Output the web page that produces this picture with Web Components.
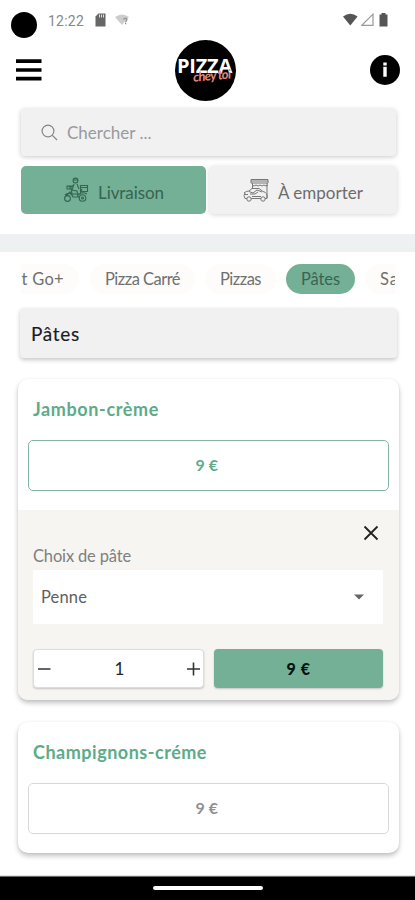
<!DOCTYPE html>
<html lang="fr">
<head>
<meta charset="utf-8">
<title>Pizza</title>
<style>
html,body{margin:0;background:#fff}
body{width:415px;height:900px;overflow:hidden;font-family:Lato,"Open Sans",sans-serif;color:#555}
</style>
</head>
<body>
<pizza-app></pizza-app>
<script>
const define=(name,html,after)=>{
  const t=document.createElement('template');t.innerHTML=html;
  customElements.define(name,class extends HTMLElement{
    constructor(){super();this.attachShadow({mode:'open'}).append(t.content.cloneNode(true));}
    connectedCallback(){if(after)after(this,this.shadowRoot);}
  });
};

/* Text tracked so that its line takes the width given in w. */
define('fit-text','<style>:host{display:inline-block;white-space:nowrap;line-height:20px;flex:none}span{display:inline-block}</style><span><slot></slot></span>',(el,root)=>{
  const w=+el.getAttribute('w'),span=root.querySelector('span');
  el.style.width=w+'px';
  span.style.letterSpacing=((w-span.getBoundingClientRect().width)/el.textContent.length)+'px';
});

define('status-bar',`<style>
:host{display:flex;height:40px;box-sizing:border-box;padding:11px 26px 0 11px;font:14px Roboto,sans-serif;color:#888}
.cam{width:26px;height:26px;border-radius:50%;background:#000;margin-right:11px;margin-top:1px}
svg{display:block;flex:none}.gap{flex:1}
</style>
<div class="cam"></div><fit-text w="36">12:22</fit-text>
<svg style="margin:2px 0 0 11px" width="11" height="14"><path d="M3.5 .5H10.5V13.5H.5V3.5Z" fill="#666"/><path d="M4.500 1.500v3M6.500 1.500v3M8.500 1.500v3" stroke="#ddd"/></svg>
<svg style="margin:3px 0 0 9px" width="15" height="13"><path d="M0 3Q7-2 14 3L7 11Z" fill="#ccc"/><path d="M8.500 5.500Q9 4 10.700 4.300Q13 5 11 7.200L10.600 8.400M10.600 9v1.200" fill="none" stroke="#888" stroke-width="1.200"/></svg>
<div class="gap"></div>
<svg style="margin-top:2px" width="15" height="13"><path d="M0 3.5Q7.3-2 14.6 3.5L7.3 12.5Z" fill="#555"/></svg>
<svg style="margin:2px 0 0 3px" width="13" height="14"><path d="M12 1.2V12.4H.8Z" fill="none" stroke="#999" stroke-width="1.2"/></svg>
<svg style="margin:2px 1px 0 5px" width="9" height="14"><path d="M2.5 0h4v1.5H8.500V13.500H.5V1.500h2Z" fill="#555"/></svg>`);

define('brand-logo',`<style>
:host{display:block;position:relative;width:61px;height:61px;border-radius:50%;background:#000;color:#fff}
.p{position:absolute;left:2px;top:16px;font:700 20px/20px "Open Sans",sans-serif}
.c{position:absolute;left:18px;top:25px;color:#e08a80;font:italic bold 13px/20px Lato,sans-serif;transform:rotate(-5deg)}
</style><fit-text class="p" w="55">PIZZA</fit-text><fit-text class="c" w="39">chey toi</fit-text>`);

define('top-bar',`<style>
:host{display:flex;justify-content:space-between;height:61px;padding:0 15px 0 16px}
svg{display:block}brand-logo{margin-right:1px}
</style>
<svg style="margin-top:19px" width="26" height="23"><path d="M0 2.200h25.500M0 11h25.500M0 19.700h25.500" stroke="#000" stroke-width="3.700"/></svg>
<brand-logo></brand-logo>
<svg style="margin-top:15px" width="30" height="30"><circle cx="15" cy="15" r="15"/><path d="M15 7.500v3M15 11.800v10" stroke="#fff" stroke-width="3.400"/></svg>`);

define('search-box',`<style>
:host{display:flex;align-items:center;height:47px;width:375px;box-sizing:border-box;padding-left:20px;background:#f1f1f1;border-radius:4px;box-shadow:0 1px 5px rgba(0,0,0,.22);font-size:17px;color:#989aa0}
svg{margin-right:9px}
</style><svg width="17" height="17" fill="none" stroke="#82858a" stroke-width="1.200"><circle cx="7" cy="7" r="5.900"/><path d="M11.400 11.400L16 16"/></svg><fit-text w="89"><slot></slot></fit-text>`);

define('mode-tab',`<style>
:host{display:flex;align-items:center;height:48px;box-sizing:border-box;background:#f1f1f1;border-radius:5px;box-shadow:0 1px 5px rgba(0,0,0,.16);font-size:17px;color:#6c6c6c;padding-top:6px}
:host([active]){background:#73b096;box-shadow:none;color:#386350}
::slotted(svg){flex:none;margin-top:-7px}
</style><slot></slot>`);

define('menu-chip',`<style>
:host{display:block;height:30px;box-sizing:border-box;padding:5px 15px;border-radius:15px;background:#fdfcfa;font-size:16.5px;color:#707070;flex:none}
:host([active]){background:#73b096;color:#3c6352}
</style><slot></slot>`);

define('section-title',`<style>
:host{display:block;width:377px;height:50px;box-sizing:border-box;padding:14px 0 0 11px;border-radius:4px;background:#f1f1f1;box-shadow:0 2px 4px rgba(0,0,0,.22);font-size:19px;color:#1c1c1c;-webkit-text-stroke:.15px}
</style><slot></slot>`);

define('price-box',`<style>
:host{display:flex;align-items:center;justify-content:center;width:361px;height:51px;box-sizing:border-box;border:1px solid #d7d9d9;border-radius:5px;margin-left:10px;padding-bottom:2px;font-size:16px;font-weight:700;color:#909090;background:#fff}
:host([active]){border-color:#82b5a1;color:#60ab8b}
</style><fit-text w="26"><slot></slot></fit-text>`);

define('dish-card',`<style>
:host{display:block;width:381px;border-radius:10px;background:#fff;box-shadow:0 3px 5px rgba(0,0,0,.24),0 0 3px rgba(0,0,0,.05);overflow:hidden}
.title{box-sizing:border-box;padding:19px 0 0 15px;height:41px;font-size:18px;font-weight:700;color:#5dab89}
</style><div class="title"><slot name="title"></slot></div><slot></slot>`);

define('option-panel',`<style>
:host{display:block;background:#f6f5f2;margin-top:19px;height:191px;box-sizing:border-box;padding:15px 15px 0}
.close{display:flex;justify-content:flex-end;height:21px;padding-right:5px}
.label{height:20px;line-height:20px;font-size:16.5px;color:#808080}
.select{display:flex;align-items:center;justify-content:space-between;width:350px;height:54px;background:#fff;box-sizing:border-box;padding:0 19px 0 8px;margin-top:4px;font-size:16.5px;color:#606060}
.row{display:flex;gap:10px;margin-top:25px}
.qty{width:171px;height:39px;box-sizing:border-box;border:1px solid #ddd;border-radius:4px;background:#fff;box-shadow:0 1px 2px #0003;display:flex;align-items:center;justify-content:space-between;padding:0 3px 0 4px;font-size:17px;color:#222}
.add{width:169px;height:39px;border-radius:4px;background:#73b096;box-shadow:0 1px 2px #0003;display:flex;align-items:center;justify-content:center;font-size:16px;font-weight:900;color:#07140e}
svg{display:block}
</style>
<div class="close"><svg width="16" height="16"><path d="M1.500 1.500L14.500 14.500M14.500 1.500L1.500 14.500" stroke="#222" stroke-width="1.800"/></svg></div>
<div class="label"><fit-text w="98">Choix de pâte</fit-text></div>
<div class="select"><fit-text w="46">Penne</fit-text><svg width="10" height="6"><path d="M0 .500h10L5 5.500Z" fill="#666"/></svg></div>
<div class="row"><div class="qty"><svg width="13" height="14"><path d="M0 7h12.500" stroke="#333" stroke-width="1.600"/></svg><fit-text w="9">1</fit-text><svg width="13" height="14"><path d="M0 7h13M6.500 .500v13" stroke="#333" stroke-width="1.600"/></svg></div>
<div class="add"><fit-text w="24">9 €</fit-text></div></div>`);

define('system-nav',`<style>
:host{display:flex;justify-content:center;height:23px;box-sizing:border-box;padding-top:9px;background:#000;box-shadow:0 -1px 1px #666}
i{width:110px;height:4px;border-radius:2px;background:#fff}
</style><i></i>`);

define('pizza-app',`<style>
:host{display:flex;flex-direction:column;width:415px;height:900px;background:#fff;overflow:hidden}
search-box{margin:8px 0 0 21px}
.tabs{display:grid;grid-template-columns:185px 188px;gap:3px;margin:10px 0 0 21px}
.band{height:18px;background:#eef1f1;margin-top:20px}
.chips{display:flex;gap:10px;width:374px;margin:12px 0 0 21px;overflow:hidden;height:30px}
section-title{margin:14px 0 0 20px}
dish-card{margin-left:18px;flex:none}
.one{margin-top:21px;height:321px}.two{margin-top:22px;height:131px}
.price{padding-top:20px}
system-nav{margin-top:auto}
</style>
<status-bar></status-bar><top-bar></top-bar>
<search-box>Chercher ...</search-box>
<div class="tabs">
<mode-tab active><svg style="margin-left:42px;margin-right:9px" width="26" height="26" fill="none" stroke="#356550" stroke-width="1.100"><circle cx="12.500" cy="3.500" r="2.400"/><path d="M10 3h5M11 7L9 13l5 1 1 6M14 7l2 5M11 8l-5 3M5 9l3 1 1 7h8l2-5M4 9h4v3H4ZM17.500 8.500h7v6h-7ZM17.500 10.500h7M3 19l4-4 3 5h7M2 18q4-4 8 1M15 18q4-4 9-1"/><circle cx="4.500" cy="21.500" r="2.900"/><circle cx="19.500" cy="21" r="3.300"/><circle cx="19.500" cy="21" r="1"/></svg><fit-text w="66">Livraison</fit-text></mode-tab>
<mode-tab><svg style="margin-left:34px;margin-right:8px" width="27" height="26" fill="none" stroke="#777" stroke-width="1"><path d="M8 2.500H25V6H8ZM8 4h17M9.500 6v6M24 6v15M9 8q2 2 4 0 2 2 4 0 2 2 4 0 2 2 4 0M1 16q2-2 5-2l3-2.500h7l4 3q5 1 4 7H2q-2-3 0-5.500ZM6 14.500l4 1.500 4-3 5 2M7 17h5l3-2M2 17.500h3M9 19.500h9"/><circle cx="6" cy="22" r="2.200" fill="#f1f1f1"/><circle cx="20" cy="22" r="2.200" fill="#f1f1f1"/></svg><fit-text w="85">À emporter</fit-text></mode-tab>
</div>
<div class="band"></div>
<div class="chips">
<menu-chip style="margin-left:-24px"><fit-text w="52">nt Go+</fit-text></menu-chip>
<menu-chip style="margin-left:1px"><fit-text w="75">Pizza Carré</fit-text></menu-chip>
<menu-chip><fit-text w="41">Pizzas</fit-text></menu-chip>
<menu-chip active><fit-text w="39">Pâtes</fit-text></menu-chip>
<menu-chip><fit-text w="19">Sa</fit-text></menu-chip>
</div>
<section-title><fit-text w="49">Pâtes</fit-text></section-title>
<dish-card class="one"><fit-text slot="title" w="126">Jambon-crème</fit-text><div class="price"><price-box active>9 €</price-box></div><option-panel></option-panel></dish-card>
<dish-card class="two"><fit-text slot="title" w="174">Champignons-créme</fit-text><div class="price"><price-box>9 €</price-box></div></dish-card>
<system-nav></system-nav>`);
</script>
</body>
</html>
